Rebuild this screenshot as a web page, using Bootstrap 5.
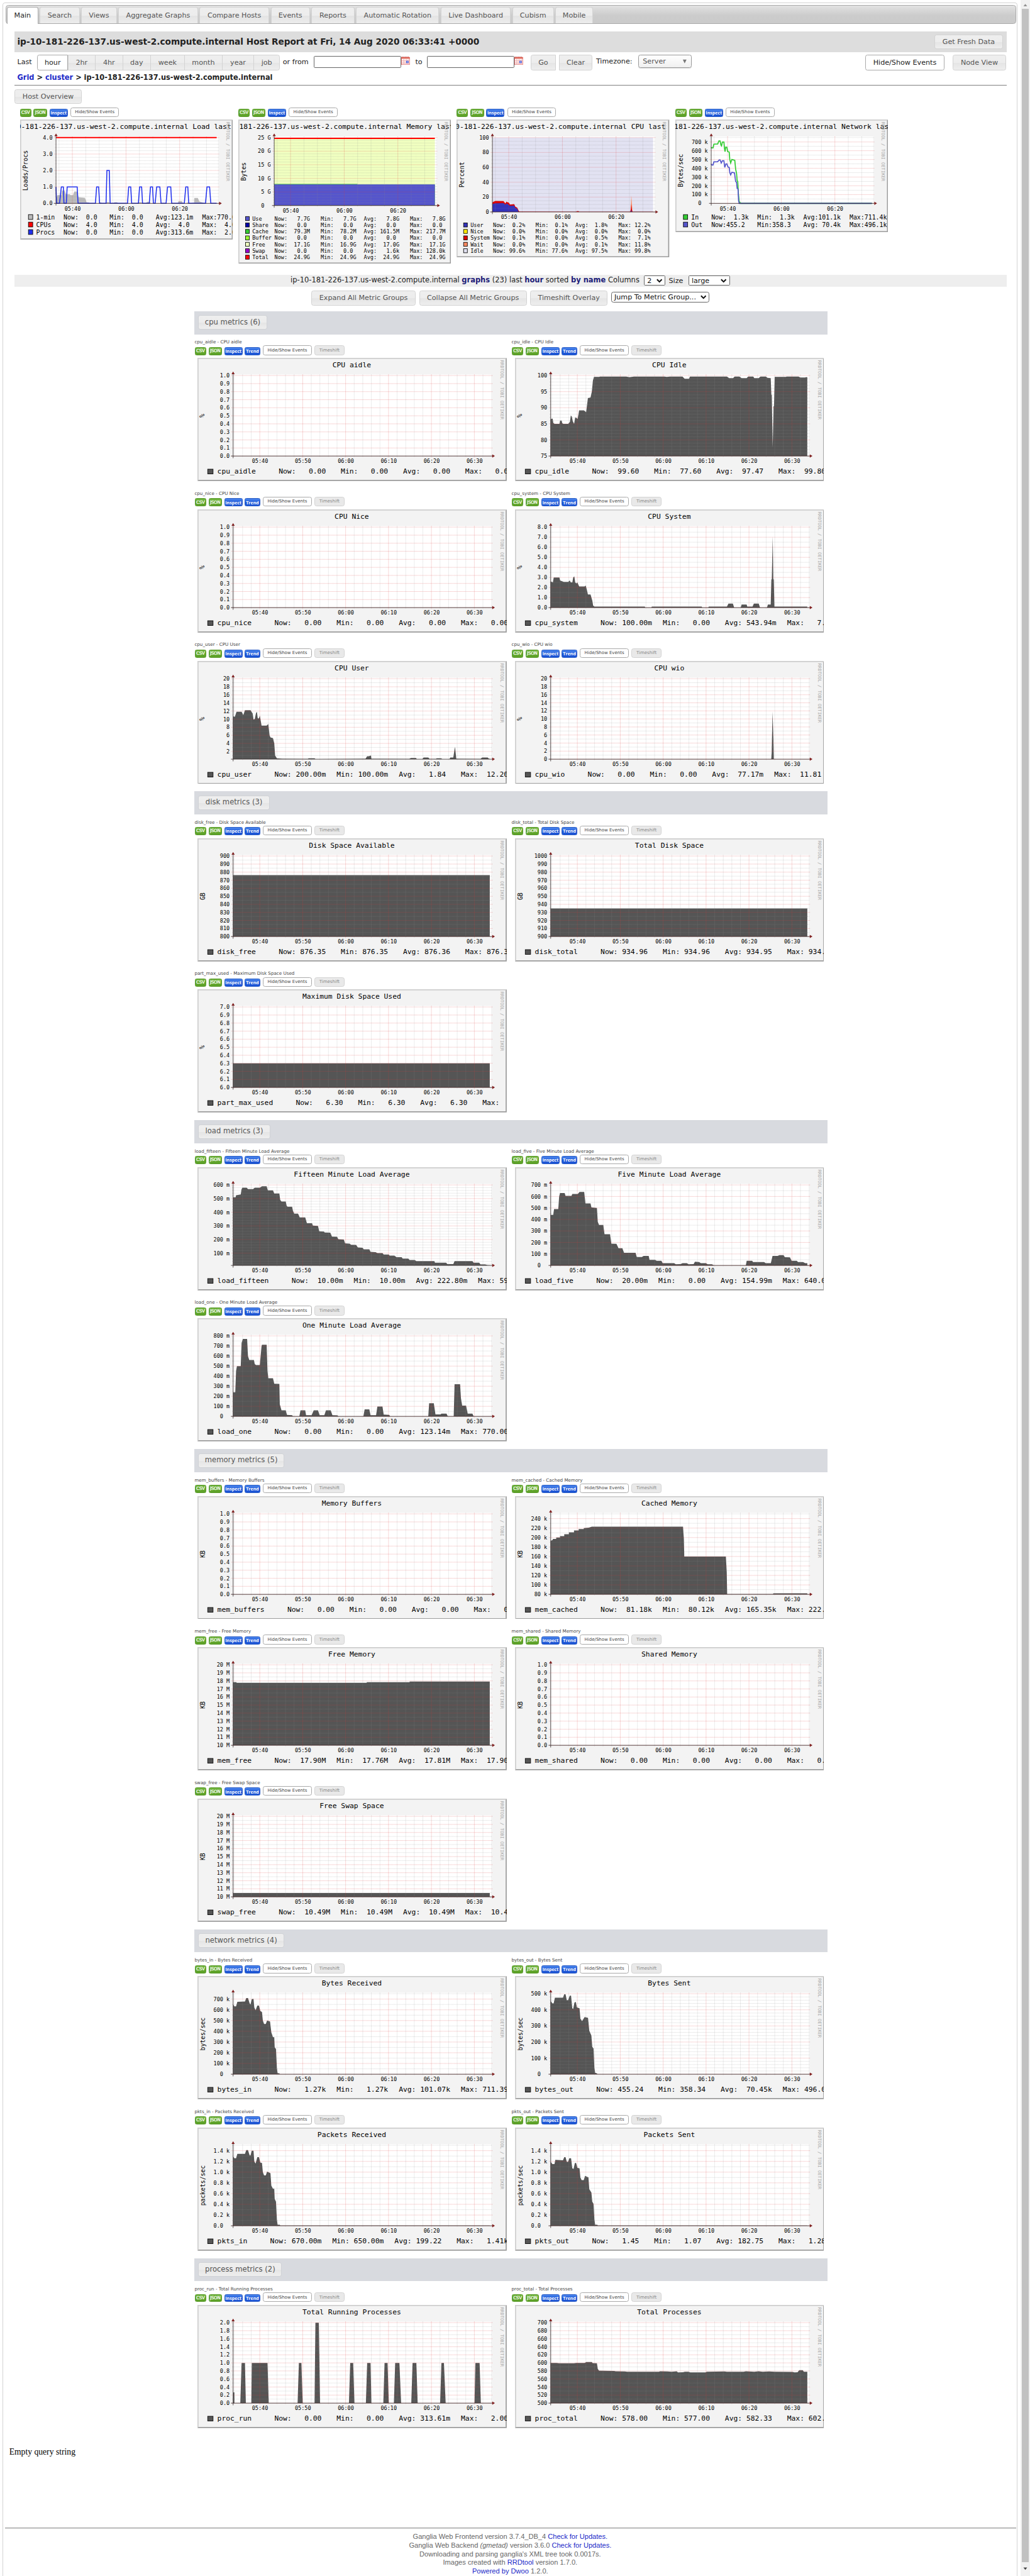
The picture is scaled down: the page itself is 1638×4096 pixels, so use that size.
<!DOCTYPE html>
<html lang="en">
<head>
<meta charset="utf-8">
<title>Ganglia:: Host Report</title>
<link href="https://cdn.jsdelivr.net/npm/bootstrap@5.3.0/dist/css/bootstrap.min.css" rel="stylesheet">
<style>
html,body{margin:0;background:#fff;overflow:hidden}
body{font-family:"DejaVu Sans",sans-serif;font-size:13.1px;line-height:1.2;color:#222}
.page{zoom:.853125;width:1920px;height:4801px;overflow:hidden}
a{text-decoration:none;color:#2028c8}
.frame{width:1892px;margin:5px 6px 0 5px;border:1px solid #d3d3d3;border-bottom:0;border-radius:5px 5px 0 0;flex:none}
.tabbar{margin:3px 2px 0 4px;height:35.5px;border:1px solid #aaa;border-radius:5px;background:linear-gradient(#e2e2e2,#ccc 55%,#cbcbcb);padding-left:1.5px;gap:3px}
.tb{height:31px;border:1px solid #d3d3d3;border-bottom:0;border-radius:4px 4px 0 0;background:linear-gradient(#eee 0,#ededed 52%,#e4e4e4 54%,#ececec);color:#555;flex:none;white-space:nowrap}
.tb.on{background:#fff;color:#222;border-color:#aaa;height:32px;margin-bottom:-1px}
.inner{width:1849px;margin-left:21px}
.titlebar{height:38px;margin-top:14.5px;background:#ddd;padding:0 6.5px 0 5px}
.titlebar b{font-size:16px;color:#222;white-space:nowrap}
.ui{display:flex;align-items:center;justify-content:center;border:1px solid #d3d3d3;border-radius:4px;background:linear-gradient(#eee 0,#ededed 50%,#e5e5e5 53%,#eee);color:#555;white-space:nowrap;flex:none}
.ui.w{background:#fff;border-color:#aaa;color:#222}
.ctl{height:29px;margin-top:5px}
.ctl>*{flex:none}
.ctl .seg{height:29px;border-radius:0;margin-left:-1px}
.inp{width:163px;height:22px;border:1.3px solid #666;border-radius:2px;background:#fff}
.crumb{height:27px;padding-left:5px;font-weight:700;font-size:13.35px;white-space:nowrap}
.rule{height:1.4px;background:#808080}
.pill{height:15px;border-radius:3px;color:#fff;flex:none;display:flex;align-items:center;justify-content:center;white-space:nowrap}
.gr{background:linear-gradient(#70b53c,#5ba026);border:1px solid #5a9a2c;font-size:8.3px;letter-spacing:-.25px;-webkit-text-stroke:.25px #fff}
.bl{background:linear-gradient(#4a86ee,#1c55d6 60%);border:1px solid #2a5cc4;font-family:"Open Sans","DejaVu Sans",sans-serif;font-weight:700;font-size:8.3px}
.tiny{height:17.8px;font-size:8.2px}
.tiny.w{color:#444}
.tiny.off{color:#888;background:#e9e9e9}
.over{height:312px;margin:6.5px 0 0 10px}
.ocell{width:407.2px;flex:none}
.ocell svg{margin-top:5px}
svg{display:block;flex:none}
svg text{white-space:pre}
.sumbar{height:22px;background:#eee;white-space:nowrap}
#sumtext{font-size:13.45px}
.sumbar b{color:#1c1c78}
.sel{border:1px solid #666;background:#fff;border-radius:2px;color:#111;display:flex;align-items:center;justify-content:space-between;padding:0 5px;flex:none;white-space:nowrap}
.groups{width:1180px;margin:10px 0 0 335px}
.group{padding-bottom:6px}
.ghead{height:43px;background:#d8dadf;padding:7.5px 0 0 7.5px}
.ghead .ui{height:27px;font-size:13.6px;color:#555;border-color:#d0d2d6}
.mcell{width:591px;height:282px;flex:none;padding-top:9px}
.mlabel{font-size:8.4px;height:12px;line-height:12px;color:#444;white-space:nowrap;padding-left:.5px}
.mcell svg{margin:5.6px 0 0 6.3px}
.pad{padding-left:1px}
.empty{font-family:"Liberation Serif",serif;font-size:16px;line-height:24px;color:#000;margin:19px 0 0 11px}
.foothr{height:2px;background:#999;margin:128.5px 2px 0 3px;border-bottom:.5px solid #ddd}
.foot{font-family:"Liberation Sans",sans-serif;font-size:13px;line-height:16px;color:#666;text-align:center;padding-top:7.5px}
.sb{width:17px;background:#f1f1f1;flex:none;padding:6px 2px}
.thumb{height:4758px;background:#c1c1c1;margin-top:4px}
</style>
<script src="https://cdn.jsdelivr.net/npm/bootstrap@5.3.0/dist/js/bootstrap.bundle.min.js"></script>
</head>
<body>
<svg width="0" height="0" class="position-absolute"><defs>
<g id="cal"><rect x=".5" y="1.5" width="15" height="13.5" fill="#fff" stroke="#d66"/><path d="M0 1h16v3H0z" fill="#e06a5c"/><path d="M1 7.5h14M1 10.5h14M1 13.2h14M4 4v11M7 4v11M10 4v11M13 4v11" stroke="#eaa" stroke-width="1"/><path d="M10 8.5h3v3h-3z" fill="#fff" stroke="#24d" stroke-width="1.2"/><path d="M1 .6h14" stroke="#a33" stroke-dasharray="1 1"/></g>
<g id="chev"><path d="M1 1.5l4.5 4.5L10 1.5" fill="none" stroke="#111" stroke-width="2.4"/></g>
</defs></svg>
<div class="page d-flex">
<main class="frame">
  <nav class="tabbar d-flex align-items-end" id="tabs"></nav>
  <div class="inner">
    <div class="titlebar d-flex align-items-center justify-content-between">
      <b>ip-10-181-226-137.us-west-2.compute.internal Host Report at Fri, 14 Aug 2020 06:33:41 +0000</b>
      <div class="ui" style="width:128px;height:27px">Get Fresh Data</div>
    </div>
    <div class="ctl d-flex align-items-start">
      <span style="width:42px;padding:6px 0 0 5px">Last</span>
      <div class="d-flex" id="ranges"></div>
      <span style="width:63px;padding:6px 0 0 5px">or from</span>
      <div class="inp" style="margin-top:2px"></div><svg width="16" height="16" style="margin-top:3px"><use href="#cal"/></svg>
      <span style="width:32px;padding:6px 0 0 10px">to</span>
      <div class="inp" style="margin-top:2px"></div><svg width="16" height="16" style="margin-top:3px"><use href="#cal"/></svg>
      <div class="ui" style="width:47px;height:29px;margin-left:14px;border-radius:4px 0 0 4px">Go</div>
      <div class="ui" style="width:62px;height:29px;margin-left:6px;border-radius:0 4px 4px 0">Clear</div>
      <span style="width:86px;padding:4px 0 0 7px">Timezone:</span>
      <div class="ui justify-content-between" style="width:99px;height:25px;background:linear-gradient(#fff,#f0f0f0);border-color:#999;padding:0 7px;box-shadow:0 1px 1px #ddd">Server<svg width="9" height="9"><path d="M1 1h7L4.500 8z" fill="#777"/></svg></div>
      <div class="ui w ms-auto" style="width:148px;height:29px">Hide/Show Events</div>
      <div class="ui" style="width:99px;height:29px;margin:0 1px 0 15.500px">Node View</div>
    </div>
    <div class="crumb d-flex align-items-center"><span><a href="#">Grid</a> &gt; <a href="#">cluster</a> &gt; ip-10-181-226-137.us-west-2.compute.internal</span></div>
    <div class="rule"></div>
    <div class="ui" style="width:125px;height:27.500px;margin-top:6.600px">Host Overview</div>
    <div class="over d-flex" id="over"></div>
    <div class="sumbar d-flex align-items-center">
      <span id="sumtext" style="margin-left:514.500px;width:658.500px">ip-10-181-226-137.us-west-2.compute.internal <b>graphs</b> (23) last <b>hour</b> sorted <b>by name</b> Columns</span>
      <div class="sel" style="width:40.500px;height:19px">2<svg width="11" height="8"><use href="#chev"/></svg></div>
      <span style="width:42.500px;padding-left:6px">Size</span>
      <div class="sel" style="width:77.500px;height:19px">large<svg width="11" height="8"><use href="#chev"/></svg></div>
    </div>
    <div class="d-flex" style="margin:7px 0 0 553px;height:29px;gap:6.300px">
      <div class="ui" style="width:195px">Expand All Metric Groups</div>
      <div class="ui" style="width:200.500px">Collapse All Metric Groups</div>
      <div class="ui" style="width:144.500px">Timeshift Overlay</div>
      <div class="sel" style="width:183.500px;height:20px;margin-top:3px;border-radius:4px">Jump To Metric Group...<svg width="11" height="8"><use href="#chev"/></svg></div>
    </div>
    <div class="groups" id="groups"></div>
  </div>
  <div class="empty">Empty query string</div>
  <div class="foothr"></div>
  <footer class="foot">Ganglia Web Frontend version 3.7.4_DB_4 <a href="#">Check for Updates.</a><br>Ganglia Web Backend <i>(gmetad)</i> version 3.6.0 <a href="#">Check for Updates.</a><br>Downloading and parsing ganglia's XML tree took 0.0017s.<br>Images created with <a href="#">RRDtool</a> version 1.7.0.<br><a href="#">Powered by Dwoo</a> 1.2.0.</footer>
</main>
<aside class="sb"><svg width="13" height="7"><path d="M3 6h7L6.500 1.500z" fill="#909090"/></svg><div class="thumb"></div><svg width="13" height="18"><path d="M3 10h7L6.500 14.500z" fill="#444"/></svg></aside>
</div>
<script>
const $=id=>document.getElementById(id);
$('tabs').innerHTML=[['Main',58.5],['Search',74],['Views',66.5],['Aggregate Graphs',148],['Compare Hosts',130],['Events',73],['Reports',80],['Automatic Rotation',155],['Live Dashboard',130.5],['Cubism',77],['Mobile',70.5]]
 .map(([t,w],i)=>`<div class="tb d-flex align-items-center justify-content-center${i?'':' on'}" style="width:${w}px">${t}</div>`).join('');
$('ranges').innerHTML=[['hour',58],['2hr',52],['4hr',52],['day',53],['week',64],['month',72],['year',59],['job',50]]
 .map(([t,w],i)=>`<div class="ui seg${i?'':' w'}" style="width:${w}px;${i?'':'margin-left:0;border-radius:4px 0 0 4px'}${i==7?'border-radius:0 4px 4px 0':''}">${t}</div>`).join('');

const MONO='font-family="DejaVu Sans Mono,monospace"';
const T=(x,y,s,t,o='')=>`<text x="${x}" y="${y}" font-size="${s}" ${MONO} ${o}>${t}</text>`;
// Draws the RRDtool style frame, grid, axes and labels around a set of shapes.
function rrd(o){
  const {w,h,ax,top,bot,lo,hi,maj,min,tx,tstep,tmin,labels}=o;
  const end=o.end, Y=v=>bot-(v-lo)/(hi-lo)*(bot-top);
  let s=`<svg width="${w}" height="${h}" viewBox="0 0 ${w} ${h}"><path d="M0 0H${w}V${h}H0z" fill="#f3f3f3"/>`;
  s+=`<path d="M0 0H${w}L${w-2} 2H2V${h-2}L0 ${h}z" fill="#cecece"/><path d="M${w} ${h}H0L2 ${h-2}H${w-2}V2L${w} 0z" fill="#9c9c9c"/>`;
  s+=`<path d="M${ax} ${top-2}H${end+2.500}V${bot}H${ax}z" fill="#fff"/>`;
  s+=o.shapes(Y);
  let gm='',gj='';
  if(min)for(let i=0,v;(v=Math.ceil(lo/min-1e-6)*min+i*min)<=hi+min*.01;i++){if(Math.abs(v/maj-Math.round(v/maj))>.01)gm+=`M${ax-2} ${Y(v).toFixed(1)}H${end+4}`}
  for(let i=0,v;(v=Math.ceil(lo/maj-1e-6)*maj+i*maj)<=hi+maj*.01;i++){
    gj+=`M${ax-3} ${Y(v).toFixed(1)}H${end+5}`;
    s+=T(ax-6.500,Y(v)+3.600,10,o.fmt(v),'text-anchor="end"');
  }
  for(let x=tx-tmin*6;x<end+2;x+=tmin){if(x>ax&&Math.abs((x-tx)/tstep-Math.round((x-tx)/tstep))>.01)gm+=`M${x.toFixed(1)} ${top-2}V${bot+2}`}
  labels.forEach((l,i)=>{const x=tx+i*tstep;gj+=`M${x} ${top-2}V${bot+3}`;s+=T(x+.5,bot+13.2,10,l,'text-anchor="middle"')});
  s+=`<path d="${gm}" stroke="#8c8c8c" stroke-opacity=".44" stroke-dasharray="1.172 1.172" stroke-width=".9"/><path d="${gj}" stroke="#dc3c3c" stroke-opacity=".52" stroke-dasharray="1.172 1.172" stroke-width=".9"/>`;
  s+=o.over?o.over(Y):'';
  s+=`<path d="M${ax} ${top-3}V${bot+4}M${ax-4} ${bot}H${end+5}" stroke="#2b2020" stroke-width=".9"/>`;
  s+=`<path d="M${ax-3} ${top-2.500}h6l-3-5zM${end+4.500} ${bot-3}v6l5-3z" fill="#802020"/>`;
  s+=T(w/2-.6,18,13.29,o.title,'text-anchor="middle"');
  s+=T(0,0,11.4,o.unit,`text-anchor="middle" transform="translate(${o.unit.length<2?13:14} ${(top+bot)/2}) rotate(-90)"`);
  s+=T(0,0,8.35,'RRDTOOL / TOBI OETIKER',`fill="#a8a8a8" transform="translate(${w-12} 4.500) rotate(90)"`);
  return s+o.legend+'</svg>';
}
const parse=d=>d.trim().split(/\s+/).map(p=>p.split(',').map(Number));
const line=(d,ax,k,Y)=>parse(d).map(([x,v],i)=>(i?'L':'M')+(ax+x/k).toFixed(1)+' '+Y(v).toFixed(1)).join('');
const area=(d,ax,k,Y,lo,c)=>{const p=parse(d),e=p[p.length-1][0];return `<path d="${line(d,ax,k,Y)}L${ax+e/k} ${Y(lo)}L${ax} ${Y(lo)}z" fill="${c}"/>`};
const sw=(x,y,w,h,c)=>`<rect x="${x}" y="${y}" width="${w}" height="${h}" fill="${c}" stroke="#000"/>`;
const pills=(trend)=>`<div class="pill gr" style="width:21px">CSV</div><div class="pill gr" style="width:25px;margin-left:4.500px">JSON</div><div class="pill bl" style="width:34px;margin-left:4.500px">Inspect</div>${trend?'<div class="pill bl" style="width:29px;margin-left:4px">Trend</div>':''}<div class="ui w tiny" style="width:91px;margin-left:5px">Hide/Show Events</div>${trend?'<div class="ui tiny off" style="width:56px;margin-left:5px">Timeshift</div>':''}`;

const pulses=(l,end)=>{let s='';l.forEach(([a,b,c,d,v=1])=>s+=` ${a},0 ${b},${v} ${c},${v} ${d},0`);return s+` ${end},0`};
const legend=(rows,f,y0,p,tx,xs,sx)=>rows.map((r,i)=>{const y=y0+i*p;return sw(sx,y-f*.75,f>11?8:7,f>11?9:7.500,r[1])+T(tx,y,f,r[0])+['Now:','Min:','Avg:','Max:'].map((n,j)=>T(xs[j],y,f,n+r[2][j])).join('')}).join('');
const H='ip-10-181-226-137.us-west-2.compute.internal ';
const base={w:396.5,ax:66.9,top:33.7,tx:97.4,tstep:100,tmin:25,labels:['05:40','06:00','06:20'],end:366.4};
const q=t=>t.split('|');
const over=[
 {h:223.7,bot:156.3,lo:0,hi:4,maj:1,min:.2,fmt:v=>v.toFixed(1),title:H+'Load last hour',unit:'Loads/Procs',
  shapes:Y=>area('0,.25 5,.5 18,.5 20,.77 30,.77 33,.56 46,.56 50,.5 58,.5 62,.72 72,.72 76,.38 98,.34 104,.07 112,.05 115,0 145,0 148,.06 153,.06 156,0 170,0 172,.08 180,.08 184,0 195,0 199,.07 207,.07 212,0 280,0 283,.07 291,.07 295,0 305,0 310,.1 318,.1 322,0 414,0 416,.14 428,.14 431,0 443,0 446,.05 452,.03 456,0 469,0 470,.33 482,.33 487,.12 500,.04 504,0 546,0',66.9,1.823,Y,0,'#bbb'),
  over:Y=>`<path d="${line('0,1 2,0'+pulses([[12,18,25,27],[35,38,72,75],[134,138,145,148],[170,173,181,184,2],[243,247,254,257],[280,284,291,294],[317,321,328,331],[337,342,353,357],[374,379,390,393],[436,441,448,451],[508,513,522,526]],546),66.9,1.823,Y)}" fill="none" stroke="#2030ee" stroke-width="1.8"/><path d="M66.900 ${Y(4)}H366.400" stroke="#f00" stroke-width="2.2"/>`,
  legend:legend([['1-min','#bbb',q('  0.0|  0.0|123.1m|770.0m')],['CPUs','#f00',q('  4.0|  4.0|  4.0|  4.0')],['Procs','#2030ee',q('  0.0|  0.0|313.6m|  2.0')]],11.6,186,14,30,[81,166.7,253,339.3],15.5)},
 {h:268.7,bot:160.3,lo:0,hi:25,maj:5,min:1,fmt:v=>v?v+' G':'0  ',title:H+'Memory last hour',unit:'Bytes',
  shapes:Y=>area('0,24.9 546,24.9',66.9,1.823,Y,0,'#f0ffc0')+area('0,7.95 283,7.95 283,7.7 546,7.7',66.9,1.823,Y,0,'#3c3')+area('0,7.75 546,7.75',66.9,1.823,Y,0,'#5555cc'),
  over:Y=>`<path d="M66.900 ${Y(24.7)}H366.400" stroke="#f00" stroke-width="2.2"/>`,
  legend:legend([['Use','#5555cc',q('   7.7G|   7.7G|   7.8G|   7.8G')],['Share','#0000aa',q('   0.0|   0.0|   0.0|   0.0')],['Cache','#33cc33',q('  79.3M|  78.2M| 161.5M| 217.7M')],['Buffer','#99ff33',q('   0.0|   0.0|   0.0|   0.0')],['Free','#f0ffc0',q('  17.1G|  16.9G|  17.0G|  17.1G')],['Swap','#9900cc',q('   0.0|   0.0|   1.6k| 128.0k')],['Total','#ff0000',q('  24.9G|  24.9G|  24.9G|  24.9G')]],10,188.4,12,26,[67.5,153.7,234,320],13.4)},
 {h:257,bot:172.3,lo:0,hi:100,maj:20,min:5,fmt:v=>''+v,title:H+'CPU last hour',unit:'Percent',
  shapes:Y=>area('0,100 546,100',66.9,1.823,Y,0,'#e2e2f2')+area('0,0 470,0 472,22 474,12 476,0 546,0',66.9,1.823,Y,0,'#ff8a60')+area('0,13 3,13.5 10,14.7 38,14.5 44,11.5 48,14 52,13 56,12.500 60,10 74,10.5 78,7 84,6 90,1 93,.4 285,.3 287,1 293,1 295,.3 468,.3 470,3 472,10.3 474,3 476,.3 546,.3',66.9,1.823,Y,0,'#d00')+area('0,10.7 10,11.6 38,11.8 44,9.800 48,11.500 52,10.500 60,8.2 74,8.5 78,5.5 84,4.500 89,.5 92,.1 470,.1 472,3.2 474,.1 546,.1',66.9,1.823,Y,0,'#33b'),
  legend:legend([['User','#3333bb',q('  0.2%|  0.1%|  1.8%| 12.2%')],['Nice','#ffea00',q('  0.0%|  0.0%|  0.0%|  0.0%')],['System','#dd0000',q('  0.1%|  0.0%|  0.5%|  7.1%')],['Wait','#ff8a60',q('  0.0%|  0.0%|  0.1%| 11.8%')],['Idle','#e2e2f2',q(' 99.6%| 77.6%| 97.5%| 99.8%')]],10,200.4,12,26,[68,147.5,221.6,301.7],13.2)},
 {h:210,bot:156.3,lo:0,hi:750,maj:100,min:50,fmt:v=>v?v+' k':'0  ',title:H+'Network last hour',unit:'Bytes/sec',
  shapes:()=>'',over:Y=>`<path d="${line('0,640 1,632 6,632 9,675 22,678 26,712 30,712 33,665 35,655 38,700 43,700 45,625 47,590 49,640 53,640 56,590 61,585 63,500 66,460 70,500 80,490 83,390 86,340 88,260 90,250 92,120 95,20 100,0 546,0',66.9,1.823,Y)}" fill="none" stroke="#33cc33" stroke-width="2"/><path d="${line('0,450 2,437 6,437 9,473 22,475 27,495 30,495 34,460 38,485 43,485 46,410 50,450 53,450 57,415 61,410 63,350 66,325 70,355 79,348 83,250 86,240 88,170 91,165 93,30 95,0 546,0',66.9,1.823,Y)}" fill="none" stroke="#5555cc" stroke-width="2"/>`,
  legend:legend([['In','#33cc33',q('  1.3k|  1.3k|101.1k|711.4k')],['Out','#5555cc',q('455.2|358.3| 70.4k|496.1k')]],11.6,186,14,29.6,[67,152.7,238.6,324.7],15)}];
$('over').innerHTML=over.map(o=>`<div class="ocell"><div class="d-flex align-items-end">${pills()}</div>${rrd({...base,...o})}</div>`).join('');

const f1=v=>v.toFixed(1), f0=v=>''+Math.round(v), sfx=u=>v=>v?Math.round(v)+' '+u:'0  ';
const f1k=v=>v>.01?v.toFixed(1)+' k':'0.0  ';
const flat=v=>`0,${v} 605,${v}`;
// name, title, unit, lo, hi, major, minor, label format, values, series, x scale
const groups=[
['cpu metrics (6)',128,[
 ['cpu_aidle','CPU aidle','%',0,1,.1,0,f1,'0.00|0.00|0.00|0.00','',1],
 ['cpu_idle','CPU Idle','%',75,100,5,1,f0,'99.60|77.60|97.47|99.80','0,86.3 3,86.6 9,86.6 12,85.3 18,85 40,85 43,86 50,86 53,85.2 58,85 80,85 88,85.6 92,87.6 97,87.2 101,85.8 107,85 112,87 119,86.8 123,86.5 130,89.2 152,89.2 162,88.6 170,93 182,93.2 188,95 193,98.5 198,99.6 222,99.6 225,99.7 345,99.7 360,99.5 380,99.7 520,99.7 530,99.6 545,99.7 602,99.7 612,99 632,99 636,99.7 805,99.7 815,99.2 833,99.2 840,99.7 862,99.7 872,99.2 895,99.2 902,99.7 925,99.7 930,99.2 950,99.2 958,99.7 983,99.7 990,99.3 1005,99.2 1008,94 1010,94 1014,77.6 1018,90.5 1020,90.5 1023,99.6 1075,99.6 1077,99.7 1132,99.7 1140,99.4 1162,99.4 1166,99.5 1172,99.5',2.45],
 ['cpu_nice','CPU Nice','%',0,1,.1,0,f1,'0.00|0.00|0.00|0.00','',1],
 ['cpu_system','CPU System','%',0,8,1,.5,f1,'100.00m|0.00|543.94m|7.10','0,2.6 10,2.5 14,3 40,3 43,2.7 60,2.55 80,2.55 87,2.7 92,2.5 99,2.5 103,3 108,3.1 112,2.5 118,2.4 122,2.5 130,2.1 155,2.1 160,2.2 165,1.8 170,1.3 182,1.3 190,.7 194,.2 200,.1 430,.1 432,0 460,0 462,.1 690,.1 692,0 720,0 722,.1 805,.1 812,.4 832,.4 838,0 868,0 872,.3 895,.3 898,.1 922,.1 928,.4 950,.4 956,0 988,0 992,.3 1005,.3 1008,2.8 1010,2.8 1014,7.1 1017,2.8 1019,2.8 1022,.1 1172,.1',2.45],
 ['cpu_user','CPU User','%',.1,20,2,1,f0,'200.00m|100.00m|1.84|12.20','0,10.7 4,10.6 8,11.8 20,11.8 24,11 28,12.2 41,12.2 46,11.4 48,9.9 51,10 54,11.5 56,11.8 58,10.2 61,10.2 63,10.9 67,8.4 79,8.4 83,8.8 86,6 88,5.5 94,5.3 97,4 99,1 103,.3 116,.2 176,.15 178,.3 192,.3 194,.1 312,.2 316,.8 320,.8 325,1 326,.2 415,.15 419,.4 431,.4 433,.1 446,.1 449,.5 460,.5 463,.15 478,.15 480,.3 490,.3 493,.1 510,.1 512,.5 519,.5 523,3.2 526,.2 583,.15 587,.5 600,.5 603,.2 605,.2',1.2645],
 ['cpu_wio','CPU wio','%',0,20,2,1,f0,'0.00|0.00|77.17m|11.81','0,0 520,0 521,1.6 523,11.8 525,5 526,0 605,0',1.2645]]],
['disk metrics (3)',133,[
 ['disk_free','Disk Space Available','GB',800,900,10,5,f0,'876.35|876.35|876.36|876.38',flat(876.36),1.2645],
 ['disk_total','Total Disk Space','GB',900,1000,10,5,f0,'934.96|934.96|934.95|934.96',flat(934.96),1.2645],
 ['part_max_used','Maximum Disk Space Used','%',6,7,.1,0,f1,'6.30|6.30|6.30|6.30',flat(6.3),1.2645]]],
['load metrics (3)',134,[
 ['load_fifteen','Fifteen Minute Load Average','',10,600,100,20,sfx('m'),'10.00m|10.00m|222.80m|590.00m','0,510 6,510 7,525 18,530 20,570 22,580 32,580 35,570 47,570 51,580 63,580 68,590 79,590 82,560 94,560 97,538 109,538 111,490 114,478 124,478 126,450 128,440 139,440 141,410 144,390 153,390 157,362 170,362 174,320 186,320 188,302 200,300 203,260 214,258 216,252 229,250 233,222 245,220 248,202 261,200 264,172 275,170 278,162 290,160 294,142 305,140 308,128 321,128 324,110 336,108 340,100 352,100 355,90 367,90 369,82 380,82 385,70 397,70 400,60 413,60 416,50 428,50 432,42 474,42 476,30 502,30 505,20 519,20 522,42 564,42 567,30 580,30 583,18 594,18 600,11 605,11',1.2645],
 ['load_five','Five Minute Load Average','',0,700,100,50,sfx('m'),'20.00m|0.00|154.99m|640.00m','0,440 6,440 8,490 18,490 20,600 22,630 33,630 35,605 49,605 51,622 64,622 68,640 79,640 82,540 94,540 96,505 109,500 111,380 114,352 124,352 127,272 140,272 143,190 155,188 160,150 169,150 173,110 200,110 203,73 215,73 219,82 231,82 233,48 246,48 250,40 261,40 264,20 291,20 295,10 306,12 311,20 321,20 325,10 337,12 340,32 350,30 354,20 366,20 370,10 380,10 385,0 460,0 462,40 475,40 477,30 503,30 507,20 519,20 523,82 535,82 539,90 549,90 552,72 564,70 568,40 580,40 583,30 595,30 600,20 605,20',1.2645],
 ['load_one','One Minute Load Average','',0,800,100,50,sfx('m'),'0.00|0.00|123.14m|770.00m','0,240 5,240 7,450 9,500 18,500 20,730 23,770 33,770 35,600 38,560 49,560 51,520 54,510 63,510 67,700 68,712 79,712 81,450 83,380 94,380 97,325 109,322 110,120 114,60 124,60 127,15 139,12 141,0 156,0 159,60 170,60 172,12 185,12 190,60 200,60 204,12 215,12 219,60 230,60 234,12 246,10 248,0 307,0 310,70 321,70 324,12 337,12 340,98 352,98 355,18 368,15 370,0 460,0 462,130 473,130 477,20 489,20 491,28 503,28 506,0 520,0 522,320 535,320 537,180 540,108 549,108 553,28 564,28 567,0 605,0',1.2645]]],
['memory metrics (5)',160,[
 ['mem_buffers','Memory Buffers','KB',0,1,.1,0,f1,'0.00|0.00|0.00|0.00','',1],
 ['mem_cached','Cached Memory','KB',80,250,20,10,sfx('k'),'81.18k|80.12k|165.35k|222.91k','0,193 5,195 5,197 13,197 13,200 22,200 22,203 32,203 32,207 43,207 43,211 55,211 55,215 66,215 66,218 78,218 78,220 90,221 97,223 312,223 314,197 315,160 413,160 415,127 416,80.3 524,80.3 525,82 605,82',1.2645],
 ['mem_free','Free Memory','KB',10,20,1,.5,sfx('M'),'17.90M|17.76M|17.81M|17.90M','0,17.84 8,17.84 8,17.76 315,17.76 315,17.84 416,17.84 416,17.92 605,17.92',1.2645],
 ['mem_shared','Shared Memory','KB',0,1,.1,0,f1,'0.00|0.00|0.00|0.00','',1],
 ['swap_free','Free Swap Space','KB',10,20,1,.5,sfx('M'),'10.49M|10.49M|10.49M|10.49M',flat(10.49),1.2645]]],
['network metrics (4)',160,[
 ['bytes_in','Bytes Received','bytes/sec',0,750,100,50,sfx('k'),'1.27k|1.27k|101.07k|711.39k','0,650 3,632 7,632 10,675 28,678 31,710 35,710 39,660 41,650 44,700 48,702 50,622 53,595 57,640 61,640 64,590 68,580 70,500 73,468 77,468 80,500 87,492 90,390 94,345 97,345 98,250 101,235 103,60 105,10 109,8 110,1 605,1',1.2645],
 ['bytes_out','Bytes Sent','bytes/sec',0,500,100,20,sfx('k'),'455.24|358.34|70.45k|496.07k','0,455 4,440 7,440 10,475 29,475 32,497 35,497 38,460 41,460 45,488 48,488 51,410 53,405 56,445 59,450 62,415 68,410 70,345 74,330 80,355 88,350 91,270 96,240 98,170 101,160 103,40 105,8 109,5 110,0 605,0',1.2645],
 ['pkts_in','Packets Received','packets/sec',0,1.5,.2,.1,f1k,'670.00m|650.00m|199.22|1.41k','0,1.29 3,1.26 7,1.26 10,1.34 28,1.34 31,1.41 35,1.41 39,1.31 41,1.31 44,1.4 48,1.4 50,1.2 53,1.16 57,1.28 61,1.28 64,1.18 68,1.17 70,1 73,.94 77,.94 80,1.01 88,.98 90,.75 94,.69 97,.69 98,.5 101,.45 103,.12 105,.02 110,.02 111,.003 605,.003',1.2645],
 ['pkts_out','Packets Sent','packets/sec',0,1.5,.2,.1,f1k,'1.45|1.07|182.75|1.28k','0,1.19 4,1.15 9,1.15 11,1.23 29,1.22 32,1.28 35,1.28 38,1.19 41,1.19 44,1.26 48,1.26 51,1.07 54,1.06 57,1.17 60,1.17 63,1.08 68,1.07 70,.9 73,.85 78,.85 81,.93 89,.9 91,.68 96,.62 98,.45 101,.41 103,.12 105,.02 110,.02 111,.003 605,.003',1.2645]]],
['process metrics (2)',156,[
 ['proc_run','Total Running Processes','',0,2,.2,.1,f1,'0.00|0.00|313.61m|2.00','0,.27 3,.27 3,0'+pulses([[17,20,28,30],[43,44,81,84],[152,155,161,164],[192,194,202,205,2],[273,276,283,286],[313,316,324,326],[354,357,364,367],[379,382,392,396],[420,423,432,435],[488,491,497,501],[569,571,581,584]],605),1.2645],
 ['proc_total','Total Processes','',500,700,20,10,f0,'578.00|577.00|582.33|602.00','0,600 14,600 20,599 55,599 60,600 80,600 84,602 97,602 99,599.5 109,599 111,585 114,580.5 150,580 153,579 175,578.5 180,578 255,578 258,579 275,578.5 285,578 297,579 300,576.5 312,577 316,578 325,578 329,576.5 365,576.5 368,578 410,578.5 415,578 455,578 460,579 480,578 490,579 500,578 515,578.5 528,578 570,577.500 575,576.500 582,577 586,582 594,582 597,578 605,578',1.2645]]]];
function metric(m){
  const [name,title,unit,lo,hi,maj,min,fmt,vals,d,k]=m, n0=80+8*name.length;
  const lab=['Now:','Min:','Avg:','Max:'];
  let lg=sw(19.1,207.5,10,8.8,'#555')+T(37,215.6,13.29,name);
  vals.split('|').forEach((v,i)=>{const u=/[a-z]$/i.test(v)?v.slice(-1):'',n=u?v.slice(0,-1):v;lg+=T(n0+i*115.9-.5,215.6,13.29,lab[i]+n.padStart(7)+u)});
  const svg=rrd({w:576.5,h:229.4,ax:66.5,top:33,bot:183,lo,hi,maj,min,fmt,title,unit,tx:116.2,tstep:80,tmin:16,labels:['05:40','05:50','06:00','06:10','06:20','06:30'],end:545,shapes:Y=>d?area(d,66.5,k,Y,lo,'#555'):'',legend:lg});
  return `<div class="mcell"><div class="mlabel">${name} - ${title}</div><div class="d-flex align-items-end pad">${pills(1)}</div>${svg}</div>`;
}
$('groups').innerHTML=groups.map(([t,w,ms])=>`<section class="group"><div class="ghead"><div class="ui" style="width:${w}px">${t}</div></div><div class="d-flex flex-wrap" style="width:1182px">${ms.map(metric).join('')}</div></section>`).join('');
</script>
</body>
</html>
